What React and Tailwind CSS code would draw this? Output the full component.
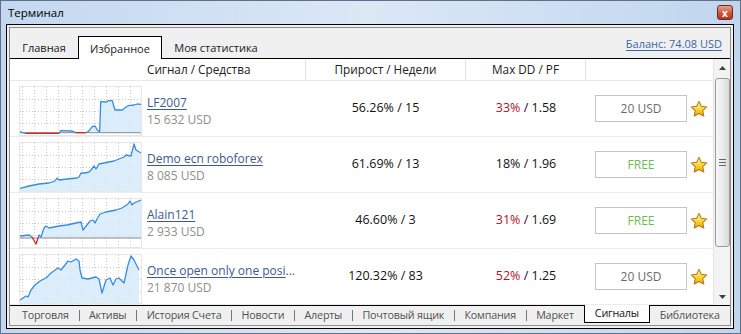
import React from "react";

const charts = [
  {
    base: 46.7,
    showBase: true,
    segs: [
      ["b", [[1, 45.7], [3, 46.3], [6.7, 47.3]]],
      ["r", [[6.7, 47.3], [40, 47.3]]],
      ["b", [[40, 47.3], [41.7, 44.7], [51.7, 45], [55, 45.7], [56.7, 46.7]]],
      ["r", [[56.7, 46.7], [66.7, 46.7]]],
      ["b", [[66.7, 46.7], [69.3, 45.7], [73.3, 40.7], [76, 40], [78.3, 44], [80.7, 45.7], [81.7, 15.7], [87.3, 16], [90, 14.7], [93.3, 14.7], [96, 24], [103.3, 24], [106.7, 21.3], [109.3, 19.7], [115, 19], [118.3, 18], [122, 18.3]]],
    ],
  },
  {
    base: 49,
    segs: [
      ["b", [[1, 46.3], [10, 44], [20, 42], [30, 41], [36, 39], [38, 36], [40, 38], [48, 37], [58, 36], [60, 35], [62, 31], [66, 31], [70, 30], [72, 28], [75, 24], [77, 27], [80, 22], [85, 21], [95, 19], [100, 17], [105, 15], [107, 13], [112, 14], [115, 2], [117, 8], [122, 11]]],
    ],
  },
  {
    base: 40,
    showBase: true,
    segs: [
      ["b", [[1, 38], [10, 37], [13, 39]]],
      ["r", [[13, 39], [17, 46], [19, 40]]],
      ["b", [[19, 40], [20, 37], [22, 39], [25, 30], [27, 28], [30, 30], [35, 29], [40, 28], [48, 27], [57, 25], [62, 24], [64, 32], [68, 27], [71, 23], [74, 22], [76, 25], [78, 21], [81, 16], [84, 15], [87, 14], [97, 12], [103, 10], [109, 6], [111, 3], [113, 7], [115, 5], [122, 2]]],
    ],
  },
  {
    base: 50,
    segs: [
      ["b", [[1, 46], [7, 42], [9, 43], [12, 36], [16, 31], [21, 27], [27, 24], [32, 19], [39, 14], [42, 16], [46, 11], [49, 7], [52, 8], [57, 5], [60, 7], [61, 16], [63, 24], [69, 25], [77, 23], [80, 25], [83, 39], [87, 26], [91, 24], [94, 31], [97, 25], [100, 24], [105, 29], [109, 11], [112, 2], [115, 6], [120, 16]]],
    ],
  },
];

const rows = [
  { name: "LF2007", funds: "15 632 USD", growth: "56.26% / 15", dd: "33%", red: true, pf: "1.58", price: "20 USD" },
  { name: "Demo ecn roboforex", funds: "8 085 USD", growth: "61.69% / 13", dd: "18%", red: false, pf: "1.96", price: "FREE" },
  { name: "Alain121", funds: "2 933 USD", growth: "46.60% / 3", dd: "31%", red: true, pf: "1.69", price: "FREE" },
  { name: "Once open only one posi", more: "...", funds: "21 870 USD", growth: "120.32% / 83", dd: "52%", red: true, pf: "1.25", price: "20 USD" },
];

const bottomTabs = ["Торговля", "Активы", "История Счета", "Новости", "Алерты", "Почтовый ящик", "Компания", "Маркет", "Сигналы", "Библиотека"];

function Chart({ data }) {
  const all = data.segs.flatMap((s) => s[1]);
  const area =
    `${all[0][0]},${data.base} ` +
    all.map(([x, y]) => `${x},${Math.min(y, data.base)}`).join(" ") +
    ` ${all[all.length - 1][0]},${data.base}`;
  const gx = [3, 15, 27, 39, 51, 63, 75, 87, 99, 111];
  const gy = [13, 25, 37];
  return (
    <svg width="123" height="50" viewBox="0 0 123 50" className="block shrink-0">
      <defs>
        <clipPath id="cbox">
          <rect x="1" y="1" width="121" height="48" />
        </clipPath>
      </defs>
      <rect x="0.5" y="0.5" width="122" height="49" fill="#fff" stroke="#e6e6e6" />
      {gx.map((x) => (
        <line key={"x" + x} x1={x + 0.5} y1="1" x2={x + 0.5} y2="49" stroke="#cfcfcf" strokeDasharray="1 2" />
      ))}
      {gy.map((y) => (
        <line key={"y" + y} x1="1" y1={y + 0.5} x2="122" y2={y + 0.5} stroke="#cfcfcf" strokeDasharray="1 2" />
      ))}
      <g clipPath="url(#cbox)">
        <polygon points={area} fill="#d6ebfc" fillOpacity="0.85" />
        {data.showBase && <line x1="1" y1={data.base} x2="122" y2={data.base} stroke="#8c8c8c" strokeWidth="1" />}
        {data.segs.map((s, i) => (
          <polyline
            key={i}
            points={s[1].map((p) => p.join(",")).join(" ")}
            fill="none"
            stroke={s[0] === "r" ? "#d42020" : "#3a8be0"}
            strokeWidth="1.3"
            strokeLinejoin="round"
          />
        ))}
      </g>
    </svg>
  );
}

function Star() {
  return (
    <svg width="18" height="18" viewBox="0 0 24 24" className="block">
      <defs>
        <linearGradient id="stg" x1="0" y1="0" x2="0" y2="1">
          <stop offset="0" stopColor="#fff6b0" />
          <stop offset="0.6" stopColor="#f7cf2c" />
          <stop offset="1" stopColor="#eba80a" />
        </linearGradient>
      </defs>
      <path
        d="M12 1.8l3.1 6.6 7.2.9-5.3 5 1.4 7.1L12 17.9l-6.4 3.5 1.4-7.1-5.3-5 7.2-.9z"
        fill="url(#stg)"
        stroke="#b27c12"
        strokeWidth="1.4"
        strokeLinejoin="round"
      />
    </svg>
  );
}

function Scrollbar() {
  return (
    <div className="w-[17px] shrink-0 bg-[#f3f3f3] border-l border-[#e4e4e4] flex flex-col items-center">
      <div className="h-[17px] w-full flex items-center justify-center">
        <svg width="7" height="4" viewBox="0 0 7 4">
          <path d="M0 4L3.5 0 7 4z" fill="#404040" />
        </svg>
      </div>
      <div className="mt-[2px] w-[15px] h-[169px] rounded-[3px] border border-[#9b9b9b] bg-gradient-to-r from-[#f7f7f7] via-[#ececec] to-[#d9d9d9] flex flex-col items-center justify-center gap-[2px]">
        <div className="w-[7px] h-px bg-[#666]" />
        <div className="w-[7px] h-px bg-[#666]" />
        <div className="w-[7px] h-px bg-[#666]" />
      </div>
      <div className="flex-1" />
      <div className="h-[17px] w-full flex items-center justify-center">
        <svg width="7" height="4" viewBox="0 0 7 4">
          <path d="M0 0L3.5 4 7 0z" fill="#404040" />
        </svg>
      </div>
    </div>
  );
}

export default function App() {
  return (
    <div className="w-[741px] h-[334px] overflow-hidden flex flex-col border border-[#5e7189] bg-gradient-to-r from-[#c3d8ef] via-[#dbe8f6] to-[#c0d6ee] pl-[5px] pr-[6px] pb-[4px] font-['Open_Sans',sans-serif] text-[11px] text-[#1a1a1a] leading-none">
      <div className="h-[23px] flex items-center shrink-0">
        <span className="pl-[2px] text-[11.5px] text-black">Терминал</span>
        <div className="ml-auto mr-[1px] w-[16px] h-[15px] rounded-[3px] border border-[#6d2c1c] bg-gradient-to-b from-[#e8a08a] via-[#cf5a3c] to-[#b8361a] flex items-center justify-center text-white text-[10px] font-bold leading-none">
          x
        </div>
      </div>

      <div className="flex-1 border border-black bg-[#f0f0f0] p-[2px]">
        <div className="h-full border border-[#8e8e8e] flex flex-col">
          <div className="h-[31px] shrink-0 flex items-end border-b border-black">
            <div className="w-[68px] h-[22px] flex items-center justify-center">Главная</div>
            <div className="relative z-10 -mb-px w-[84px] h-[23px] flex items-center justify-center bg-white border-x border-t border-black">
              Избранное
            </div>
            <div className="w-[108px] h-[22px] flex items-center justify-center">Моя статистика</div>
            <span className="ml-auto mr-[8px] self-center text-[#3a67a8] underline underline-offset-2">Баланс: 74.08 USD</span>
          </div>

          <div className="h-[246px] shrink-0 flex overflow-hidden">
            <div className="flex-1 bg-white flex flex-col">
              <div className="h-[22px] shrink-0 flex border-b border-[#e8e8e8] text-[11.75px] text-[#222]">
                <div className="w-[295px] flex items-center pl-[137px]">Сигнал / Средства</div>
                <div className="w-[160px] flex items-center justify-center border-l border-[#e2e2e2]">Прирост / Недели</div>
                <div className="w-[120px] flex items-center justify-center border-l border-[#e2e2e2]">Max DD / PF</div>
                <div className="flex-1 border-l border-[#e2e2e2]" />
              </div>
              {rows.map((r, i) => (
                <div key={r.name} className="h-[56px] shrink-0 flex border-b border-[#ececec]">
                  <div className="w-[295px] flex items-start pt-[5px] pl-[9px]">
                    <Chart data={charts[i]} />
                    <div className="ml-[5px] pt-[9px] flex flex-col text-[12px] leading-[16px]">
                      <span className="text-[#3c5a92] whitespace-nowrap">
                        <span className="underline underline-offset-2">{r.name}</span>
                        {r.more}
                      </span>
                      <span className="mt-px text-[#8e8e8e]">{r.funds}</span>
                    </div>
                  </div>
                  <div className="w-[161px] flex items-center justify-center text-[12.5px] text-[#111]">{r.growth}</div>
                  <div className="w-[120px] flex items-center justify-center text-[12.5px] text-[#111]">
                    <span className={r.red ? "text-[#b0102a]" : ""}>{r.dd}</span>
                    <span>&nbsp;/ {r.pf}</span>
                  </div>
                  <div className="flex-1 flex items-center pl-[9px]">
                    <div
                      className={`w-[92px] h-[27px] border border-[#c4c4c4] flex items-center justify-center text-[12px] ${
                        r.price === "FREE" ? "text-[#69bb4f]" : "text-[#6b6b6b]"
                      }`}
                    >
                      {r.price}
                    </div>
                    <div className="ml-[3px]">
                      <Star />
                    </div>
                  </div>
                </div>
              ))}
            </div>
            <Scrollbar />
          </div>

          <div className="flex-1 flex items-start border-t border-black pl-[2px] text-[10.75px] tracking-[-0.2px] text-[#505050]">
            {bottomTabs.map((t, i) => {
              const active = t === "Сигналы";
              const sep = !active && bottomTabs[i + 1] !== "Сигналы";
              return (
                <React.Fragment key={t}>
                  {active ? (
                    <div className="-mt-px h-[18px] px-[10px] flex items-center bg-white border-x border-b border-black text-[#111]">{t}</div>
                  ) : (
                    <div className="h-[19px] px-[10px] flex items-center whitespace-nowrap">{t}</div>
                  )}
                  {sep && <div className="w-px h-[11px] bg-[#777] mt-[4px]" />}
                </React.Fragment>
              );
            })}
          </div>
        </div>
      </div>
    </div>
  );
}
